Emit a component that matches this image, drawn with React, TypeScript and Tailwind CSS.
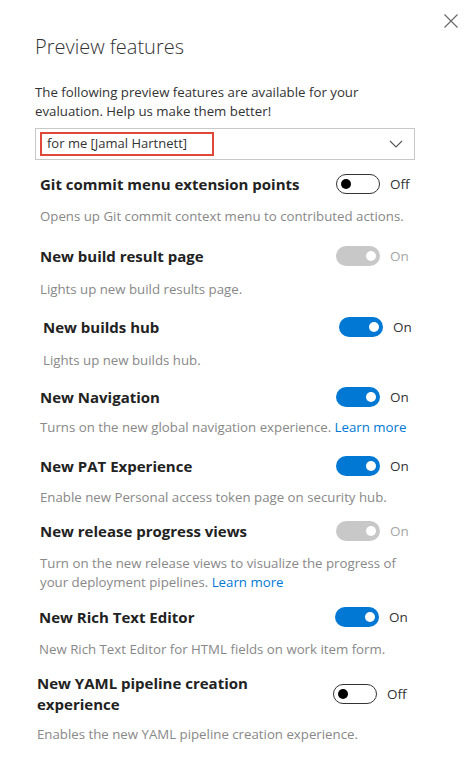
type Feature = {
  title: string;
  desc: string;
  on: boolean;
  disabled?: boolean;
  link?: boolean;
  wrap: string;
  head: string;
  body: string;
};

const features: Feature[] = [
  {
    title: "Git commit menu extension points",
    desc: "Opens up Git commit context menu to contributed actions.",
    on: false,
    wrap: "mt-[12px] pl-[40px]",
    head: "h-[24px]",
    body: "mt-[11px] w-[390px]",
  },
  {
    title: "New build result page",
    desc: "Lights up new build results page.",
    on: true,
    disabled: true,
    wrap: "mt-[18px] pl-[40px]",
    head: "h-[24px]",
    body: "mt-[12px] w-[390px]",
  },
  {
    title: "New builds hub",
    desc: "Lights up new builds hub.",
    on: true,
    wrap: "mt-[16px] pl-[43px]",
    head: "h-[24px]",
    body: "mt-[12px] w-[390px]",
  },
  {
    title: "New Navigation",
    desc: "Turns on the new global navigation experience.",
    on: true,
    link: true,
    wrap: "mt-[15px] pl-[40px]",
    head: "h-[24px]",
    body: "mt-[9px] w-[390px]",
  },
  {
    title: "New PAT Experience",
    desc: "Enable new Personal access token page on security hub.",
    on: true,
    wrap: "mt-[17px] pl-[40px]",
    head: "h-[24px]",
    body: "mt-[10px] w-[390px]",
  },
  {
    title: "New release progress views",
    desc: "Turn on the new release views to visualize the progress of your deployment pipelines.",
    on: true,
    disabled: true,
    link: true,
    wrap: "mt-[12px] pl-[40px]",
    head: "h-[24px]",
    body: "mt-[11px] w-[360px]",
  },
  {
    title: "New Rich Text Editor",
    desc: "New Rich Text Editor for HTML fields on work item form.",
    on: true,
    wrap: "mt-[13px] pl-[39px]",
    head: "h-[24px]",
    body: "mt-[11px] w-[390px]",
  },
  {
    title: "New YAML pipeline creation experience",
    desc: "Enables the new YAML pipeline creation experience.",
    on: false,
    wrap: "mt-[13px] pl-[37px]",
    head: "h-[44px]",
    body: "mt-[9px] w-[390px]",
  },
];

const Toggle = ({ on, disabled }: { on: boolean; disabled?: boolean }) => {
  if (!on) {
    return (
      <div className="flex items-center w-[44px] h-[20px] rounded-full border border-[#333] pl-[4px]">
        <div className="w-[10px] h-[10px] rounded-full bg-black" />
      </div>
    );
  }
  return (
    <div
      className={`flex items-center justify-end w-[44px] h-[20px] rounded-full pr-[4px] ${
        disabled ? "bg-[#c8c8c8]" : "bg-[#0078d4]"
      }`}
    >
      <div className="w-[10px] h-[10px] rounded-full bg-white" />
    </div>
  );
};

export default function App() {
  return (
    <div className="w-[469px] h-[761px] bg-white font-['Open_Sans',sans-serif] text-[#333] relative overflow-hidden">
      {/* close button */}
      <button className="absolute top-[13px] left-[443px]">
        <svg width="16" height="16" viewBox="0 0 16 16" fill="none" stroke="#666" strokeWidth="1.1">
          <path d="M1.5 1.5 L14.5 14.5 M14.5 1.5 L1.5 14.5" />
        </svg>
      </button>

      <div className="pt-[33px] pl-[35px]">
        <h1 className="text-[20px] font-light leading-[28px] text-[#333]">Preview features</h1>
        <p className="mt-[22px] w-[380px] text-[13.25px] leading-[19px] text-[#333]">
          The following preview features are available for your evaluation. Help us make them better!
        </p>

        {/* scope dropdown */}
        <div className="mt-[7px] w-[380px] h-[32px] border border-[#c8c8c8] flex items-center justify-between pl-[4px] pr-[11px]">
          <div className="h-[24px] w-[174px] border-2 border-[#e0493a] flex items-center pl-[5px] text-[13px] text-[#333]">
            for me [Jamal Hartnett]
          </div>
          <svg width="14" height="8" viewBox="0 0 14 8" fill="none" stroke="#555" strokeWidth="1.1">
            <path d="M1 1 L7 7 L13 1" />
          </svg>
        </div>
      </div>

      {features.map((f) => (
        <div key={f.title} className={f.wrap}>
          <div className={`flex items-center ${f.head}`}>
            <div className="w-[296px]">
              <div className="w-[270px] text-[15px] font-bold leading-[21px] text-[#222]">
                {f.title}
              </div>
            </div>
            <Toggle on={f.on} disabled={f.disabled} />
            <span
              className={`ml-[10px] text-[13.5px] ${
                f.disabled ? "text-[#a6a6a6]" : "text-[#333]"
              }`}
            >
              {f.on ? "On" : "Off"}
            </span>
          </div>
          <p className={`${f.body} text-[13.25px] leading-[19px] text-[#888]`}>
            {f.desc}
            {f.link && <span className="text-[#0078d4]"> Learn more</span>}
          </p>
        </div>
      ))}
    </div>
  );
}
